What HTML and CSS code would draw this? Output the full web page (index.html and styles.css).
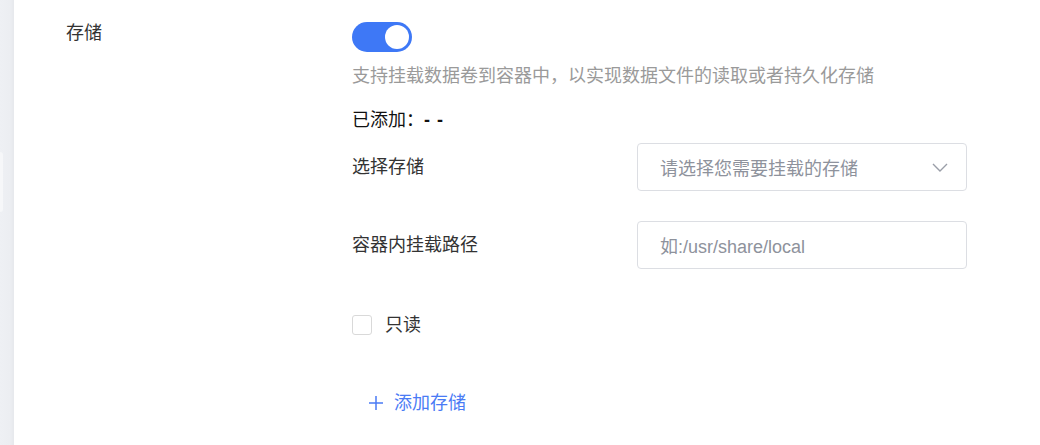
FILE: index.html
```html
<!DOCTYPE html>
<html lang="zh-CN">
<head>
<meta charset="utf-8">
<title>存储</title>
<link rel="stylesheet" href="styles.css">
</head>
<body>
<div class="page">
  <aside class="sidebar"><div class="sidebar-tab"></div></aside>
  <main class="main">
    <div class="form-item">
      <div class="item-label">存储</div>
      <div class="item-body">
        <div class="switch is-on"><span class="switch-knob"></span></div>
        <p class="desc">支持挂载数据卷到容器中，以实现数据文件的读取或者持久化存储</p>
        <p class="added">已添加：<span class="dash">- -</span></p>
        <div class="sub-row first">
          <div class="sub-label">选择存储</div>
          <div class="control select">
            <span class="placeholder">请选择您需要挂载的存储</span>
            <svg class="chevron" width="16" height="9" viewBox="0 0 16 9"><path d="M1 1l7 7 7-7" fill="none" stroke="#9a9ea8" stroke-width="1.4"/></svg>
          </div>
        </div>
        <div class="sub-row second">
          <div class="sub-label">容器内挂载路径</div>
          <div class="control input">
            <span class="placeholder">如:/usr/share/local</span>
          </div>
        </div>
        <label class="checkbox-row">
          <span class="checkbox"></span>
          <span class="checkbox-text">只读</span>
        </label>
        <div class="add-btn">
          <svg class="plus" width="14" height="14" viewBox="0 0 14 14"><path d="M7 0v14M0 7h14" stroke="#4a7bf5" stroke-width="1.5" fill="none"/></svg>
          <span>添加存储</span>
        </div>
      </div>
    </div>
  </main>
</div>
</body>
</html>
```

FILE: styles.css
```css
* { box-sizing: border-box; }
html, body { margin: 0; padding: 0; background: #fff; }
body {
  font-family: "Liberation Sans", "Noto Sans CJK SC", sans-serif;
  color: #333;
}
.page {
  display: flex;
  height: 445px;
  overflow: hidden;
}
.sidebar {
  width: 14px;
  flex: none;
  background: linear-gradient(to right, #eef0f4 0, #eceef2 10px, #e6e8ec 14px);
  padding-top: 152px;
}
.sidebar-tab {
  width: 3px;
  height: 60px;
  background: #f6f7f9;
  border-radius: 0 4px 4px 0;
}
.main {
  flex: 1;
  padding: 21px 0 0 52px;
}
.form-item {
  display: grid;
  grid-template-columns: 286px 615px;
}
.item-label {
  font-size: 18px;
  line-height: 24px;
  color: #333;
}
.item-body {
  display: flex;
  flex-direction: column;
  align-items: flex-start;
}
.switch {
  position: relative;
  width: 60px;
  height: 30px;
  margin-top: 1px;
  border-radius: 15px;
  background: #3e78f6;
}
.switch-knob {
  position: absolute;
  top: 3px;
  right: 3px;
  width: 24px;
  height: 24px;
  border-radius: 50%;
  background: #fff;
}
.desc {
  margin: 12px 0 0;
  font-size: 18px;
  line-height: 24px;
  color: #9a9a9a;
  white-space: nowrap;
}
.added {
  margin: 20px 0 0;
  font-size: 18px;
  line-height: 24px;
  color: #111;
}
.dash {
  font-weight: bold;
  letter-spacing: 1px;
}
.sub-row {
  display: flex;
  align-items: center;
  width: 615px;
}
.sub-row.first { margin-top: 11px; }
.sub-row.second { margin-top: 30px; }
.sub-label {
  width: 285px;
  font-size: 18px;
  line-height: 24px;
  color: #333;
}
.control {
  width: 330px;
  height: 48px;
  border: 1px solid #dcdee3;
  border-radius: 4px;
  display: flex;
  align-items: center;
  justify-content: space-between;
  padding: 0 18px 0 22px;
}
.placeholder {
  font-size: 18px;
  color: #8e929c;
}
.chevron { display: block; }
.checkbox-row {
  display: flex;
  align-items: center;
  gap: 13px;
  margin-top: 44px;
}
.checkbox {
  width: 20px;
  height: 20px;
  border: 1px solid #d9d9d9;
  border-radius: 3px;
  background: #fff;
}
.checkbox-text {
  font-size: 18px;
  line-height: 24px;
  color: #333;
}
.add-btn {
  display: flex;
  align-items: center;
  gap: 11px;
  margin: 54px 0 0 17px;
  font-size: 18px;
  line-height: 24px;
  color: #4a7bf5;
}
.plus { display: block; }
```
